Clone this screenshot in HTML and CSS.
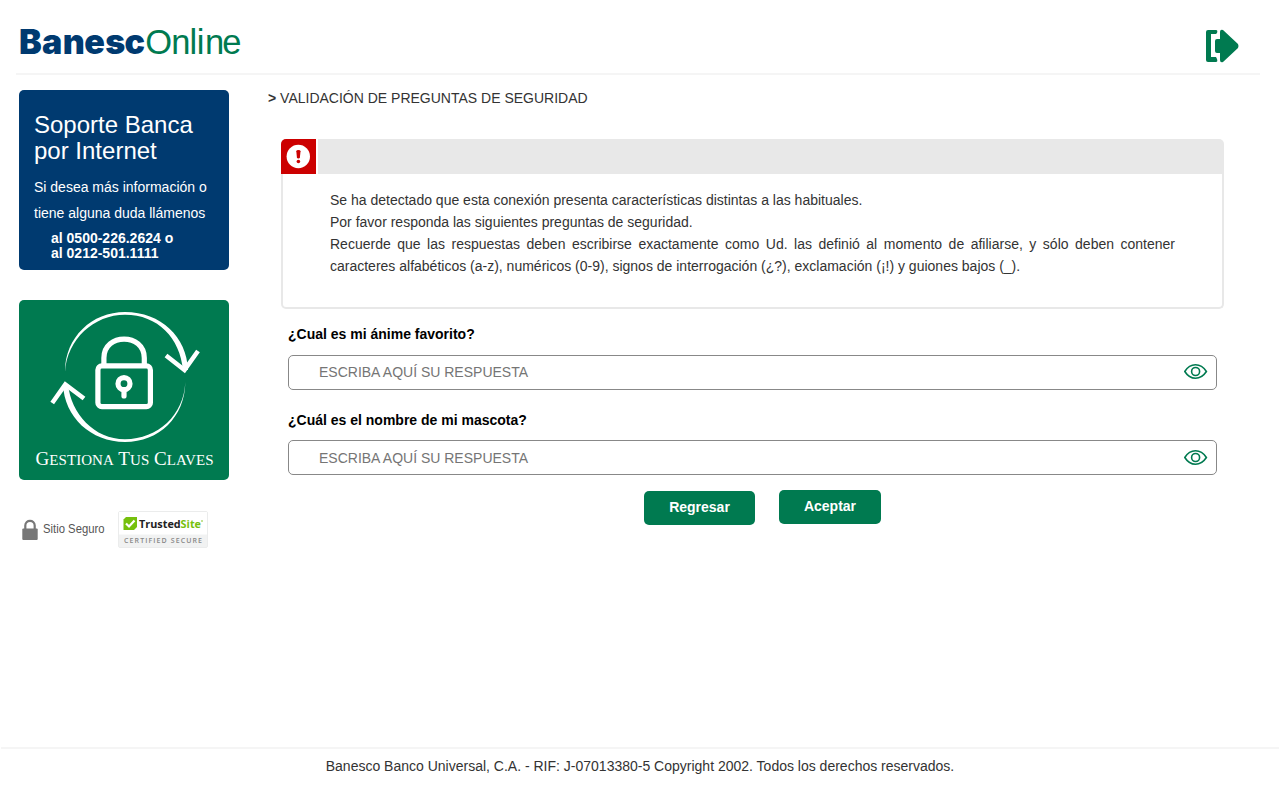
FILE: index.html
```html
<!DOCTYPE html>
<html lang="es">
<head>
<meta charset="utf-8">
<title>BanescOnline</title>
<link rel="stylesheet" href="styles.css">
</head>
<body>
<header class="header">
  <svg class="logo" width="232" height="40" viewBox="0 0 232 40" role="img" aria-label="BanescOnline">
    <text class="logo-bold" x="3 26 46.800 68.300 89.300 108.600" y="34">Banesc</text>
    <text class="logo-light" x="129.200 155.200 173.500 180.700 189 206.300" y="34">Online</text>
  </svg>
  <a class="exit" href="#" aria-label="Salir">
    <svg width="34" height="34" viewBox="0 0 34 34">
      <path d="M3 1H11Q13 1 12 4L11 5H6V28H11L12 30Q13 33 11 33H3Q1 33 1 31V3Q1 1 3 1Z"/>
      <path d="M15 3Q15 0 18 1L33 15Q34 17 33 19L18 33Q15 34 15 31V24H12Q10 24 10 22V12Q10 10 12 10H15Z"/>
    </svg>
  </a>
</header>
<div class="layout">
  <aside class="sidebar">
    <section class="support">
      <h2>Soporte Banca por Internet</h2>
      <p>Si desea más información o tiene alguna duda llámenos</p>
      <strong>al 0500-226.2624 o<br>al 0212-501.1111</strong>
    </section>
    <a class="keys" href="#">
      <svg width="210" height="180" viewBox="0 0 210 180">
        <g class="solid">
          <path d="M46 72C46 37 73 12 106 12C142 12 168 37 169 70H164C161 38 139 14.700 106 14.700C75 14.700 48 39 46 72Z"/>
          <path d="M166.300 82C166 117 140 142 106 142C72 142 45 117 44 84H49C52 114 75 139 106 139.300C139 139 165 115 166.300 82Z"/>
        </g>
        <g class="line">
          <path d="M147 55.500L165.500 70L179 51" stroke-width="4.500"/>
          <path d="M33.200 103L46.300 84.500L65 98.500" stroke-width="4.500"/>
          <rect x="78.900" y="65.900" width="52.500" height="40.800" rx="4"/>
          <path d="M84.900 65V58C84.900 32.800 125.300 32.800 125.300 58V65"/>
          <circle cx="105" cy="83.700" r="6"/>
          <path d="M105 90V96" stroke-linecap="round"/>
        </g>
        <text class="keys-text" x="16.500" y="164.500" textLength="178">G<tspan>ESTIONA</tspan> T<tspan>US</tspan> C<tspan>LAVES</tspan></text>
      </svg>
    </a>
    <div class="seals">
      <div class="secure">
        <svg width="16" height="22" viewBox="0 0 16 22">
          <path d="M3.300 11V6.500C3.300 .2 12.700 .2 12.700 6.500V11" fill="none" stroke="#777" stroke-width="2.200"/>
          <rect x="0.300" y="9.500" width="15.400" height="11.500" rx="1" fill="#777"/>
        </svg>
        <svg width="68" height="20" viewBox="0 0 68 20"><text class="secure-text" x="1" y="14" textLength="61.500" lengthAdjust="spacingAndGlyphs">Sitio Seguro</text></svg>
      </div>
      <svg class="trusted" width="90" height="37" viewBox="0 0 90 37">
        <rect x=".5" y=".5" width="89" height="36" rx="1.500" fill="#f1f2f2" stroke="#ebecec"/>
        <rect x="1" y="1" width="88" height="22.500" fill="#fff"/>
        <path d="M8 6H19V16L16 19H5.500V8.500Z" fill="#76c00d"/>
        <path d="M8 12.500L11 15.500L16.500 9.500" fill="none" stroke="#fff" stroke-width="2.200"/>
        <text class="trusted-name" x="21" y="16.500" textLength="62" lengthAdjust="spacingAndGlyphs">Trusted<tspan>Site</tspan></text>
        <circle cx="84" cy="10" r=".8" fill="#76c00d"/>
        <text class="trusted-sub" x="6" y="32" textLength="78">CERTIFIED SECURE</text>
      </svg>
    </div>
  </aside>
  <main class="main">
    <h1><b>&gt;</b> VALIDACIÓN DE PREGUNTAS DE SEGURIDAD</h1>
    <section class="notice">
      <div class="notice-head">
        <span class="alert">
          <svg width="35" height="35" viewBox="0 0 35 35">
            <circle cx="17.300" cy="17.500" r="11.700" fill="#fff"/>
            <path d="M15.300 12.200Q15.300 11 17.400 11T19.500 12.200L18.900 18.300Q18.700 19.500 17.400 19.500T15.900 18.300Z" fill="#c00"/>
            <circle cx="17.400" cy="22.500" r="1.800" fill="#c00"/>
          </svg>
        </span>
      </div>
      <div class="notice-body">
        <p>Se ha detectado que esta conexión presenta características distintas a las habituales.</p>
        <p>Por favor responda las siguientes preguntas de seguridad.</p>
        <p>Recuerde que las respuestas deben escribirse exactamente como Ud. las definió al momento de afiliarse, y sólo deben contener caracteres alfabéticos (a-z), numéricos (0-9), signos de interrogación (¿?), exclamación (¡!) y guiones bajos (_).</p>
      </div>
    </section>
    <form class="questions">
      <label for="q1">¿Cual es mi ánime favorito?</label>
      <div class="field">
        <input id="q1" type="text" placeholder="ESCRIBA AQUÍ SU RESPUESTA">
        <svg class="eye" width="24" height="16" viewBox="0 0 24 16"><path d="M.8 7.500Q5 .8 11.500 .8T22.400 7.500Q18 14.200 11.500 14.200T.8 7.500Z"/><circle cx="11.600" cy="7.500" r="4"/></svg>
      </div>
      <label for="q2">¿Cuál es el nombre de mi mascota?</label>
      <div class="field second">
        <input id="q2" type="text" placeholder="ESCRIBA AQUÍ SU RESPUESTA">
        <svg class="eye" width="24" height="16" viewBox="0 0 24 16"><path d="M.8 7.500Q5 .8 11.500 .8T22.400 7.500Q18 14.200 11.500 14.200T.8 7.500Z"/><circle cx="11.600" cy="7.500" r="4"/></svg>
      </div>
      <div class="actions">
        <button class="back" type="button">Regresar</button>
        <button class="accept" type="button">Aceptar</button>
      </div>
    </form>
  </main>
</div>
<footer class="footer">Banesco Banco Universal, C.A. - RIF: J-07013380-5 Copyright 2002. Todos los derechos reservados.</footer>
</body>
</html>
```
FILE: styles.css
```css
* { box-sizing: border-box; }
body {
  margin: 0;
  height: 800px;
  display: flex;
  flex-direction: column;
  overflow: hidden;
  background: #fff;
  color: #333;
  font: 14px/20px "Liberation Sans", Arial, sans-serif;
}
h1, h2, p { margin: 0; font-weight: 400; }

.header {
  height: 75px;
  margin: 0 20px 0 16px;
  padding: 20px 21px 0 0;
  border-bottom: 2px solid #f5f5f5;
  display: flex;
  justify-content: space-between;
  align-items: flex-start;
}
.logo { display: block; overflow: visible; }
.logo-bold { font: 900 34px Inter, sans-serif; fill: #003a70; }
.logo-light { font: 400 34.5px "Liberation Sans", Arial, sans-serif; fill: #007a50; }
.exit { margin-top: 9px; display: block; }
.exit svg { display: block; fill: #007a50; }

.layout { flex: 1; display: flex; padding: 15px 56px 0 19px; }
.sidebar { width: 210px; }
.support {
  height: 180px;
  padding: 22px 15px 0;
  border-radius: 5px;
  background: #003a70;
  color: #fff;
}
.support h2 { font-size: 24px; line-height: 26px; }
.support p { margin-top: 10px; line-height: 26px; }
.support strong { display: block; margin: 5px 0 0 17px; line-height: 15px; }

.keys { display: block; height: 180px; margin-top: 30px; border-radius: 5px; background: #007a50; }
.keys svg { display: block; }
.solid { fill: #fff; }
.line { fill: none; stroke: #fff; stroke-width: 5.2; }
.keys-text { fill: #fff; font: 19px "Liberation Serif", serif; }
.keys-text tspan { font-size: 15px; }

.seals { display: flex; margin-top: 31px; }
.secure { width: 99px; display: flex; padding: 8px 0 0 3px; gap: 4px; }
.secure svg { flex: none; }
.secure-text { font-size: 12px; fill: #555; }
.trusted { flex: none; }
.trusted-name { font: 700 10.5px "Open Sans", sans-serif; fill: #222; }
.trusted-name tspan { fill: #76c00d; }
.trusted-sub { font: 600 7px "Open Sans", sans-serif; fill: #888; }

.main { flex: 1; padding-left: 39px; }
.main h1 { font-size: 14px; line-height: 16px; }
.notice { height: 170px; margin: 33px 0 0 13px; display: flex; flex-direction: column; }
.notice-head { height: 35px; background: #e8e8e8; border-radius: 5px 5px 0 0; }
.alert { display: block; width: 37px; height: 35px; background: #c00; border-right: 2px solid #fff; border-top-left-radius: 5px; }
.alert svg { display: block; }
.notice-body {
  flex: 1;
  padding: 15px 47px 0;
  border: 2px solid #e8e8e8;
  border-top: 0;
  border-radius: 0 0 5px 5px;
  line-height: 22px;
  text-align: justify;
}

.questions { margin: 15px 7px 0 20px; }
.questions label { display: block; color: #000; font-weight: 700; }
.field { display: flex; align-items: flex-start; height: 35px; margin: 11px 0 20px; padding: 0 8px 0 30px; border: 1px solid #888; border-radius: 5px; }
.field input { flex: 1; min-width: 0; height: 32px; padding: 0; border: 0; outline: 0; font: inherit; background: transparent; }
.field input::placeholder { color: #757575; }
.eye { margin-top: 8px; fill: none; stroke: #007a50; stroke-width: 1.6; }
.second { margin: 10px 0 15px; }
.second input { margin-top: 1px; }
.second .eye { margin-top: 9px; }

.actions { display: flex; align-items: flex-start; gap: 24px; padding-left: 356px; }
.actions button { height: 34px; padding: 0 0 2px; border: 0; border-radius: 5px; background: #007a50; color: #fff; font: 700 14px "Liberation Sans", Arial, sans-serif; }
.back { width: 111px; margin-top: 1px; }
.accept { width: 102px; }

.footer { height: 53px; margin: 0 1px; padding-top: 7px; border-top: 2px solid #f5f5f5; text-align: center; }
```
